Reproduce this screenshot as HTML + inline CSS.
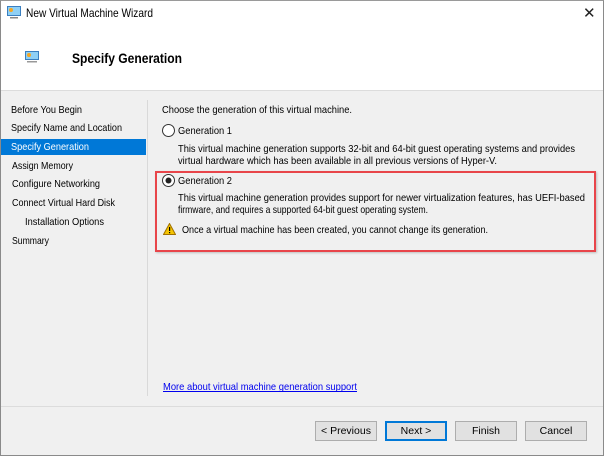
<!DOCTYPE html>
<html><head><style>
*{margin:0;padding:0;box-sizing:border-box}
body{width:604px;height:456px;overflow:hidden;font-family:"Liberation Sans",sans-serif;font-size:11px;color:#000;background:#f0f0f0;position:relative}
.win{position:absolute;left:0;top:0;width:604px;height:456px;border:1px solid #8a8a8a;border-top-color:#9a9a9a}
.abs{position:absolute;white-space:nowrap}
.btn{position:absolute;top:421px;width:62px;height:20px;border:1px solid #adadad;background:#e1e1e1;text-align:center;line-height:18px;font-size:10.5px}
svg text{font-family:"Liberation Sans",sans-serif;font-size:10.5px}
</style></head><body>
<div class="abs" style="left:0;top:0;width:604px;height:91px;background:#fff"></div>
<div class="abs" style="left:0;top:90px;width:604px;height:1px;background:#dcdcdc"></div>
<svg class="abs" style="left:7px;top:6px" width="14" height="13"><rect x="0.5" y="0.5" width="13" height="9" fill="#8fd0f5" stroke="#3a7fc0"/><circle cx="4" cy="4" r="2" fill="#f5a623"/><rect x="3" y="11" width="8" height="1.5" fill="#888"/></svg>
<svg class="abs" style="left:25px;top:51px" width="14" height="12"><rect x="0.5" y="0.5" width="13" height="8" fill="#8fd0f5" stroke="#3a7fc0"/><circle cx="4" cy="4" r="2" fill="#f5a623"/><rect x="2" y="10" width="10" height="1.5" fill="#999"/></svg>
<div class="abs" style="left:147px;top:100px;width:1px;height:296px;background:#d9d9d9"></div>
<div class="abs" style="left:1px;top:139px;width:145px;height:16px;background:#0078d7"></div>
<div class="abs" style="left:155px;top:171px;width:441px;height:81px;border:2px solid #e8454a;box-shadow:1px 1px 2px rgba(0,0,0,.2)"></div>
<svg class="abs" style="left:162px;top:124px" width="13" height="13"><circle cx="6.5" cy="6.5" r="6" fill="#fff" stroke="#333"/></svg>
<svg class="abs" style="left:162px;top:174px" width="13" height="13"><circle cx="6.5" cy="6.5" r="6" fill="#fff" stroke="#333"/><circle cx="6.5" cy="6.5" r="3" fill="#222"/></svg>
<svg class="abs" style="left:163px;top:223px" width="13" height="12"><path d="M6.5 0.5L12.5 11.5H0.5Z" fill="#f5c400" stroke="#a07000"/><rect x="6" y="4" width="1.2" height="4" fill="#000"/><rect x="6" y="9" width="1.2" height="1.2" fill="#000"/></svg>
<svg class="abs" style="left:0;top:0" width="604" height="456">
<text x="26" y="17" style="font-size:12px" textLength="127" lengthAdjust="spacingAndGlyphs">New Virtual Machine Wizard</text>
<text x="583" y="18" style="font-size:15px" fill="#222">✕</text>
<text x="72" y="63" style="font-size:13.5px;font-weight:bold" textLength="110" lengthAdjust="spacingAndGlyphs">Specify Generation</text>
<text x="11" y="113" textLength="71" lengthAdjust="spacingAndGlyphs">Before You Begin</text>
<text x="11" y="131" textLength="111" lengthAdjust="spacingAndGlyphs">Specify Name and Location</text>
<text x="11" y="150" fill="#fff" textLength="78" lengthAdjust="spacingAndGlyphs">Specify Generation</text>
<text x="12" y="169" textLength="61" lengthAdjust="spacingAndGlyphs">Assign Memory</text>
<text x="12" y="187" textLength="88" lengthAdjust="spacingAndGlyphs">Configure Networking</text>
<text x="12" y="206" textLength="103" lengthAdjust="spacingAndGlyphs">Connect Virtual Hard Disk</text>
<text x="25" y="225" textLength="79" lengthAdjust="spacingAndGlyphs">Installation Options</text>
<text x="12" y="244" textLength="37" lengthAdjust="spacingAndGlyphs">Summary</text>
<text x="162" y="113" textLength="190" lengthAdjust="spacingAndGlyphs">Choose the generation of this virtual machine.</text>
<text x="178" y="134" textLength="54" lengthAdjust="spacingAndGlyphs">Generation 1</text>
<text x="178" y="152" textLength="397" lengthAdjust="spacingAndGlyphs">This virtual machine generation supports 32-bit and 64-bit guest operating systems and provides</text>
<text x="178" y="164" textLength="319" lengthAdjust="spacingAndGlyphs">virtual hardware which has been available in all previous versions of Hyper-V.</text>
<text x="178" y="184" textLength="54" lengthAdjust="spacingAndGlyphs">Generation 2</text>
<text x="178" y="201" textLength="407" lengthAdjust="spacingAndGlyphs">This virtual machine generation provides support for newer virtualization features, has UEFI-based</text>
<text x="178" y="213" textLength="250" lengthAdjust="spacingAndGlyphs">firmware, and requires a supported 64-bit guest operating system.</text>
<text x="182" y="233" textLength="306" lengthAdjust="spacingAndGlyphs">Once a virtual machine has been created, you cannot change its generation.</text>
<text x="163" y="390" fill="#0000ee" textLength="194" lengthAdjust="spacingAndGlyphs">More about virtual machine generation support</text>
<rect x="163" y="391" width="194" height="1" fill="#0000ee"/>
</svg>
<div class="abs" style="left:1px;top:406px;width:602px;height:1px;background:#dcdcdc"></div>
<div class="btn" style="left:315px">&lt; Previous</div>
<div class="btn" style="left:385px;border:2px solid #0078d7;line-height:16px">Next &gt;</div>
<div class="btn" style="left:455px">Finish</div>
<div class="btn" style="left:525px">Cancel</div>
<div class="win"></div>
</body></html>
